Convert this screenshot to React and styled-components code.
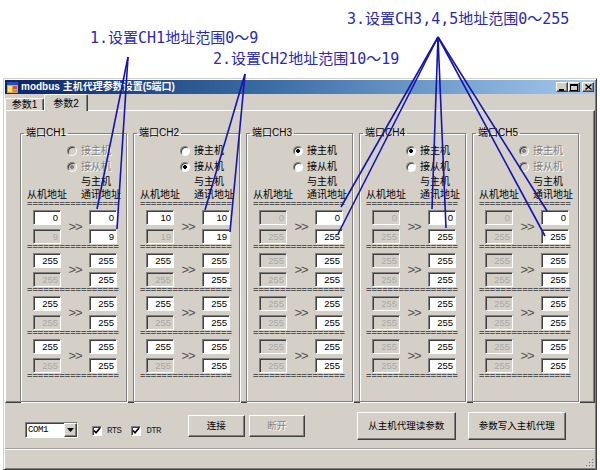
import React from 'react';
import styled, { createGlobalStyle, css } from 'styled-components';

const GlobalStyle = createGlobalStyle`
  html, body {
    margin: 0;
    padding: 0;
    background: #fff;
  }
  body {
    font-family: "Noto Sans CJK SC", sans-serif;
  }
`;

const cjk = `"Liberation Sans", "Noto Sans CJK SC", sans-serif`;
const face = '#d4d0c8';

const raised = css`
  border: 1px solid;
  border-color: #fff #404040 #404040 #fff;
  box-shadow: inset -1px -1px #808080;
`;

const sunken = css`
  border: 1px solid;
  border-color: #808080 #fff #fff #808080;
  box-shadow: inset 1px 1px #404040;
`;

const greyed = css`
  color: #808080;
  text-shadow: 1px 1px 0 #fff;
`;

const Sheet = styled.div`
  position: relative;
  box-sizing: border-box;
  width: 600px;
  height: 470px;
  padding-top: 78px;
  overflow: hidden;
  background: #fff;
`;

/* callouts drawn over the dialog */
const Notes = styled.svg`
  position: absolute;
  left: 0;
  top: 0;
  z-index: 5;
  pointer-events: none;
`;

const Note = styled.div`
  position: absolute;
  left: ${({ $x }) => $x}px;
  top: ${({ $y }) => $y}px;
  z-index: 6;
  font: 15px/16px "DejaVu Sans Mono", "Noto Sans CJK SC", monospace;
  color: #2a2ab4;
  white-space: nowrap;
`;

const Window = styled.div`
  box-sizing: border-box;
  width: 594px;
  height: 392px;
  margin-left: 3px;
  padding: 1px;
  background: ${face};
  border: 1px solid;
  border-color: ${face} #404040 #404040 ${face};
  box-shadow: inset 1px 1px #fff, inset -1px -1px #808080;
  display: flex;
  flex-direction: column;
`;

const TitleBar = styled.div`
  height: 14px;
  display: flex;
  align-items: center;
  padding: 0 1px 0 2px;
  background: linear-gradient(to right, #0a246a, #3a6ea5 45%, #a6caf0);
`;

const TitleText = styled.span`
  margin-left: 3px;
  flex: 1;
  font: bold 10px/14px ${cjk};
  color: #fff;
  white-space: nowrap;
`;

const Caps = styled.div`
  display: flex;
`;

const CapButton = styled.span`
  box-sizing: border-box;
  width: 12px;
  height: 10px;
  margin-left: ${({ $gap }) => $gap || 0}px;
  background: ${face};
  ${raised};
  display: flex;
  align-items: center;
  justify-content: center;
`;

const TabStrip = styled.div`
  height: 16px;
  display: flex;
  align-items: flex-end;
`;

const Tab = styled.div`
  position: relative;
  box-sizing: border-box;
  width: ${({ $w }) => $w}px;
  height: ${({ $active }) => ($active ? 17 : 12)}px;
  margin-bottom: ${({ $active }) => ($active ? -1 : 0)}px;
  z-index: ${({ $active }) => ($active ? 1 : 0)};
  background: ${face};
  border: 1px solid;
  border-bottom: none;
  border-color: #fff #404040 transparent #fff;
  border-radius: 2px 2px 0 0;
  box-shadow: inset -1px 0 #808080;
  font: 10px/11px ${cjk};
  color: #000;
  display: flex;
  align-items: center;
  justify-content: center;
`;

const TabPage = styled.div`
  box-sizing: border-box;
  height: 294px;
  padding: 16px 0 0 14px;
  border: 1px solid;
  border-color: #fff #404040 #404040 #fff;
  box-shadow: inset -1px -1px #808080;
  display: flex;
  gap: 6px;
`;

const Group = styled.fieldset`
  box-sizing: border-box;
  width: 107px;
  min-width: 0;
  margin: 0;
  padding: 0 0 4px;
  border: 1px solid #808080;
  box-shadow: inset 1px 1px #fff, 1px 1px 0 #fff;
`;

const Legend = styled.legend`
  margin-left: 3px;
  padding: 0 2px;
  font: 10px/12px ${cjk};
  color: #000;
`;

const Radios = styled.div`
  padding: 4px 0 0 46px;
`;

const Radio = styled.label`
  height: 16px;
  display: flex;
  align-items: center;
  gap: 4px;
  font: 10px/12px ${cjk};
  color: #000;
  ${({ $off }) => $off && greyed};
`;

const Dot = styled.span`
  box-sizing: border-box;
  width: 10px;
  height: 10px;
  border-radius: 50%;
  border: 1px solid;
  border-color: #808080 #fff #fff #808080;
  box-shadow: inset 1px 1px #404040;
  background: ${({ $on, $off }) => {
    const fill = $off ? face : '#fff';
    const mark = $off ? '#808080' : '#000';
    return $on ? `radial-gradient(circle, ${mark} 0 1.6px, ${fill} 2.2px)` : fill;
  }};
`;

const Heads = styled.div`
  display: flex;
  align-items: flex-end;
  padding-left: 6px;
  font: 10px/13px ${cjk};
  color: #000;
`;

const HeadLeft = styled.span`
  width: 54px;
`;

const HeadRight = styled.span`
  white-space: nowrap;
`;

const Rule = styled.div`
  height: 9px;
  padding-left: 6px;
  font: bold 9px/9px "Liberation Mono", monospace;
  color: #555;
  white-space: nowrap;
  overflow: hidden;
`;

const Block = styled.div`
  display: grid;
  grid-template-columns: 28px 28px 28px;
  grid-template-rows: 15px 15px;
  row-gap: 4px;
  margin-left: 12px;
`;

const Field = styled.div`
  box-sizing: border-box;
  grid-column: ${({ $col }) => $col};
  ${sunken};
  background: ${({ $off }) => ($off ? face : '#fff')};
  padding-right: 2px;
  text-align: right;
  font: 9.5px/13px "Liberation Sans", sans-serif;
  color: ${({ $off }) => ($off ? '#a8a8a8' : '#000')};
`;

const Arrow = styled.span`
  grid-column: 2;
  grid-row: 1 / 3;
  align-self: center;
  justify-self: center;
  font: 13px/14px "Liberation Sans", sans-serif;
  letter-spacing: -1px;
  color: #505050;
`;

const BottomBar = styled.div`
  height: 46px;
  padding-left: 20px;
  display: flex;
  align-items: center;
`;

const Combo = styled.div`
  box-sizing: border-box;
  width: 53px;
  height: 16px;
  margin-top: 7px;
  ${sunken};
  background: #fff;
  display: flex;
`;

const ComboText = styled.span`
  flex: 1;
  padding-left: 2px;
  font: 9px/14px "Liberation Mono", monospace;
  letter-spacing: -0.4px;
  color: #000;
`;

const ComboButton = styled.span`
  box-sizing: border-box;
  width: 13px;
  background: ${face};
  ${raised};
  display: flex;
  align-items: center;
  justify-content: center;
`;

const Check = styled.label`
  margin: 10px 0 0 ${({ $ml }) => $ml}px;
  display: flex;
  align-items: center;
  gap: 5px;
  font: 9px/10px "Liberation Mono", monospace;
  letter-spacing: -0.6px;
  color: #202020;
`;

const CheckBox = styled.span`
  box-sizing: border-box;
  width: 10px;
  height: 10px;
  ${sunken};
  background: #fff;
  display: flex;
  align-items: center;
  justify-content: center;
`;

const Button = styled.button`
  box-sizing: border-box;
  width: ${({ $w }) => $w}px;
  height: ${({ $h }) => $h}px;
  margin-left: ${({ $ml }) => $ml}px;
  padding: 0;
  background: ${face};
  border: 1px solid;
  border-color: #fff #404040 #404040 #fff;
  box-shadow: inset -1px -1px #808080, inset 1px 1px ${face};
  font: 9.5px/12px ${cjk};
  color: #000;
  ${({ disabled }) => disabled && greyed};
`;

const StatusBar = styled.div`
  height: 18px;
  border-top: 1px solid #fff;
  box-shadow: 0 -1px 0 #a0a0a0;
  display: flex;
  justify-content: flex-end;
  align-items: flex-end;
`;

const ports = [
  { id: 'CH1', locked: true, master: false, first: ['0', '9'], slaveOpen: true },
  { id: 'CH2', locked: false, master: false, first: ['10', '19'], slaveOpen: true },
  { id: 'CH3', locked: false, master: true, first: ['0', '255'], slaveOpen: false },
  { id: 'CH4', locked: false, master: true, first: ['0', '255'], slaveOpen: false },
  { id: 'CH5', locked: true, master: true, first: ['0', '255'], slaveOpen: false },
];

const leaders = [
  [128, 57, 97, 209],
  [128, 57, 117, 229],
  [245, 74, 205, 210],
  [245, 74, 230, 232],
  [438, 37, 341, 207],
  [438, 37, 338, 234],
  [438, 37, 432, 209],
  [438, 37, 446, 228],
  [438, 37, 547, 211],
  [438, 37, 545, 236],
];

const RULE = '=================';

function Port({ port }) {
  return (
    <Group>
      <Legend>端口{port.id}</Legend>
      <Radios>
        <Radio $off={port.locked}>
          <Dot $on={port.master} $off={port.locked} />
          接主机
        </Radio>
        <Radio $off={port.locked}>
          <Dot $on={!port.master} $off={port.locked} />
          接从机
        </Radio>
      </Radios>
      <Heads>
        <HeadLeft>从机地址</HeadLeft>
        <HeadRight>
          与主机
          <br />
          通讯地址
        </HeadRight>
      </Heads>
      <Rule>{RULE}</Rule>
      {[0, 1, 2, 3].map((i) => {
        const [top, bottom] = i === 0 ? port.first : ['255', '255'];
        return (
          <React.Fragment key={i}>
            <Block>
              <Field $col={1} $off={!port.slaveOpen}>{top}</Field>
              <Arrow>&gt;&gt;</Arrow>
              <Field $col={3}>{top}</Field>
              <Field $col={1} $off>{bottom}</Field>
              <Field $col={3}>{bottom}</Field>
            </Block>
            <Rule>{RULE}</Rule>
          </React.Fragment>
        );
      })}
    </Group>
  );
}

function AppIcon() {
  return (
    <svg width="11" height="11" viewBox="0 0 11 11">
      <rect x="0" y="0" width="11" height="11" fill="#f0a030" />
      <rect x="0" y="0" width="11" height="3" fill="#2050c0" />
      <rect x="1" y="4" width="4" height="6" fill="#ffe060" />
      <rect x="6" y="4" width="4" height="3" fill="#e05020" />
      <rect x="6" y="8" width="4" height="2" fill="#60a0e0" />
    </svg>
  );
}

function Grip() {
  const dots = [
    [9, 3], [6, 6], [9, 6], [3, 9], [6, 9], [9, 9],
  ];
  return (
    <svg width="12" height="12" viewBox="0 0 12 12">
      {dots.map(([x, y]) => (
        <React.Fragment key={`${x}-${y}`}>
          <rect x={x} y={y} width="2" height="2" fill="#fff" />
          <rect x={x} y={y} width="1.5" height="1.5" fill="#808080" />
        </React.Fragment>
      ))}
    </svg>
  );
}

function Tick() {
  return (
    <svg width="8" height="8" viewBox="0 0 8 8">
      <path d="M1 3.5 L3 5.8 L7 1" fill="none" stroke="#000" strokeWidth="1.6" />
    </svg>
  );
}

export default function App() {
  return (
    <Sheet>
      <GlobalStyle />
      <Note $x={90} $y={30}>1.设置CH1地址范围0～9</Note>
      <Note $x={213} $y={51}>2.设置CH2地址范围10～19</Note>
      <Note $x={347} $y={11}>3.设置CH3,4,5地址范围0～255</Note>
      <Notes width="600" height="470" viewBox="0 0 600 470">
        {leaders.map(([x1, y1, x2, y2], i) => (
          <line key={i} x1={x1} y1={y1} x2={x2} y2={y2} stroke="#1414b0" strokeWidth="1.6" />
        ))}
      </Notes>

      <Window>
        <TitleBar>
          <AppIcon />
          <TitleText>modbus 主机代理参数设置(5端口)</TitleText>
          <Caps>
            <CapButton>
              <svg width="8" height="7" viewBox="0 0 8 7">
                <rect x="1" y="5" width="5" height="2" fill="#000" />
              </svg>
            </CapButton>
            <CapButton>
              <svg width="8" height="7" viewBox="0 0 8 7">
                <rect x="0.5" y="0.5" width="7" height="6" fill="none" stroke="#000" />
                <rect x="0" y="0" width="8" height="2" fill="#000" />
              </svg>
            </CapButton>
            <CapButton $gap={2}>
              <svg width="7" height="6" viewBox="0 0 7 6">
                <path d="M0.5 0.5 L6.5 5.5 M6.5 0.5 L0.5 5.5" stroke="#000" strokeWidth="1.4" />
              </svg>
            </CapButton>
          </Caps>
        </TitleBar>

        <TabStrip>
          <Tab $w={39}>参数1</Tab>
          <Tab $w={44} $active>参数2</Tab>
        </TabStrip>

        <TabPage>
          {ports.map((port) => (
            <Port key={port.id} port={port} />
          ))}
        </TabPage>

        <BottomBar>
          <Combo>
            <ComboText>COM1</ComboText>
            <ComboButton>
              <svg width="7" height="4" viewBox="0 0 7 4">
                <path d="M0 0 H7 L3.5 4 Z" fill="#000" />
              </svg>
            </ComboButton>
          </Combo>
          <Check $ml={14}>
            <CheckBox>
              <Tick />
            </CheckBox>
            RTS
          </Check>
          <Check $ml={10}>
            <CheckBox>
              <Tick />
            </CheckBox>
            DTR
          </Check>
          <Button $w={57} $h={22} $ml={27}>连接</Button>
          <Button $w={56} $h={22} $ml={4} disabled>断开</Button>
          <Button $w={99} $h={28} $ml={52}>从主机代理读参数</Button>
          <Button $w={98} $h={28} $ml={12}>参数写入主机代理</Button>
        </BottomBar>

        <StatusBar>
          <Grip />
        </StatusBar>
      </Window>
    </Sheet>
  );
}
